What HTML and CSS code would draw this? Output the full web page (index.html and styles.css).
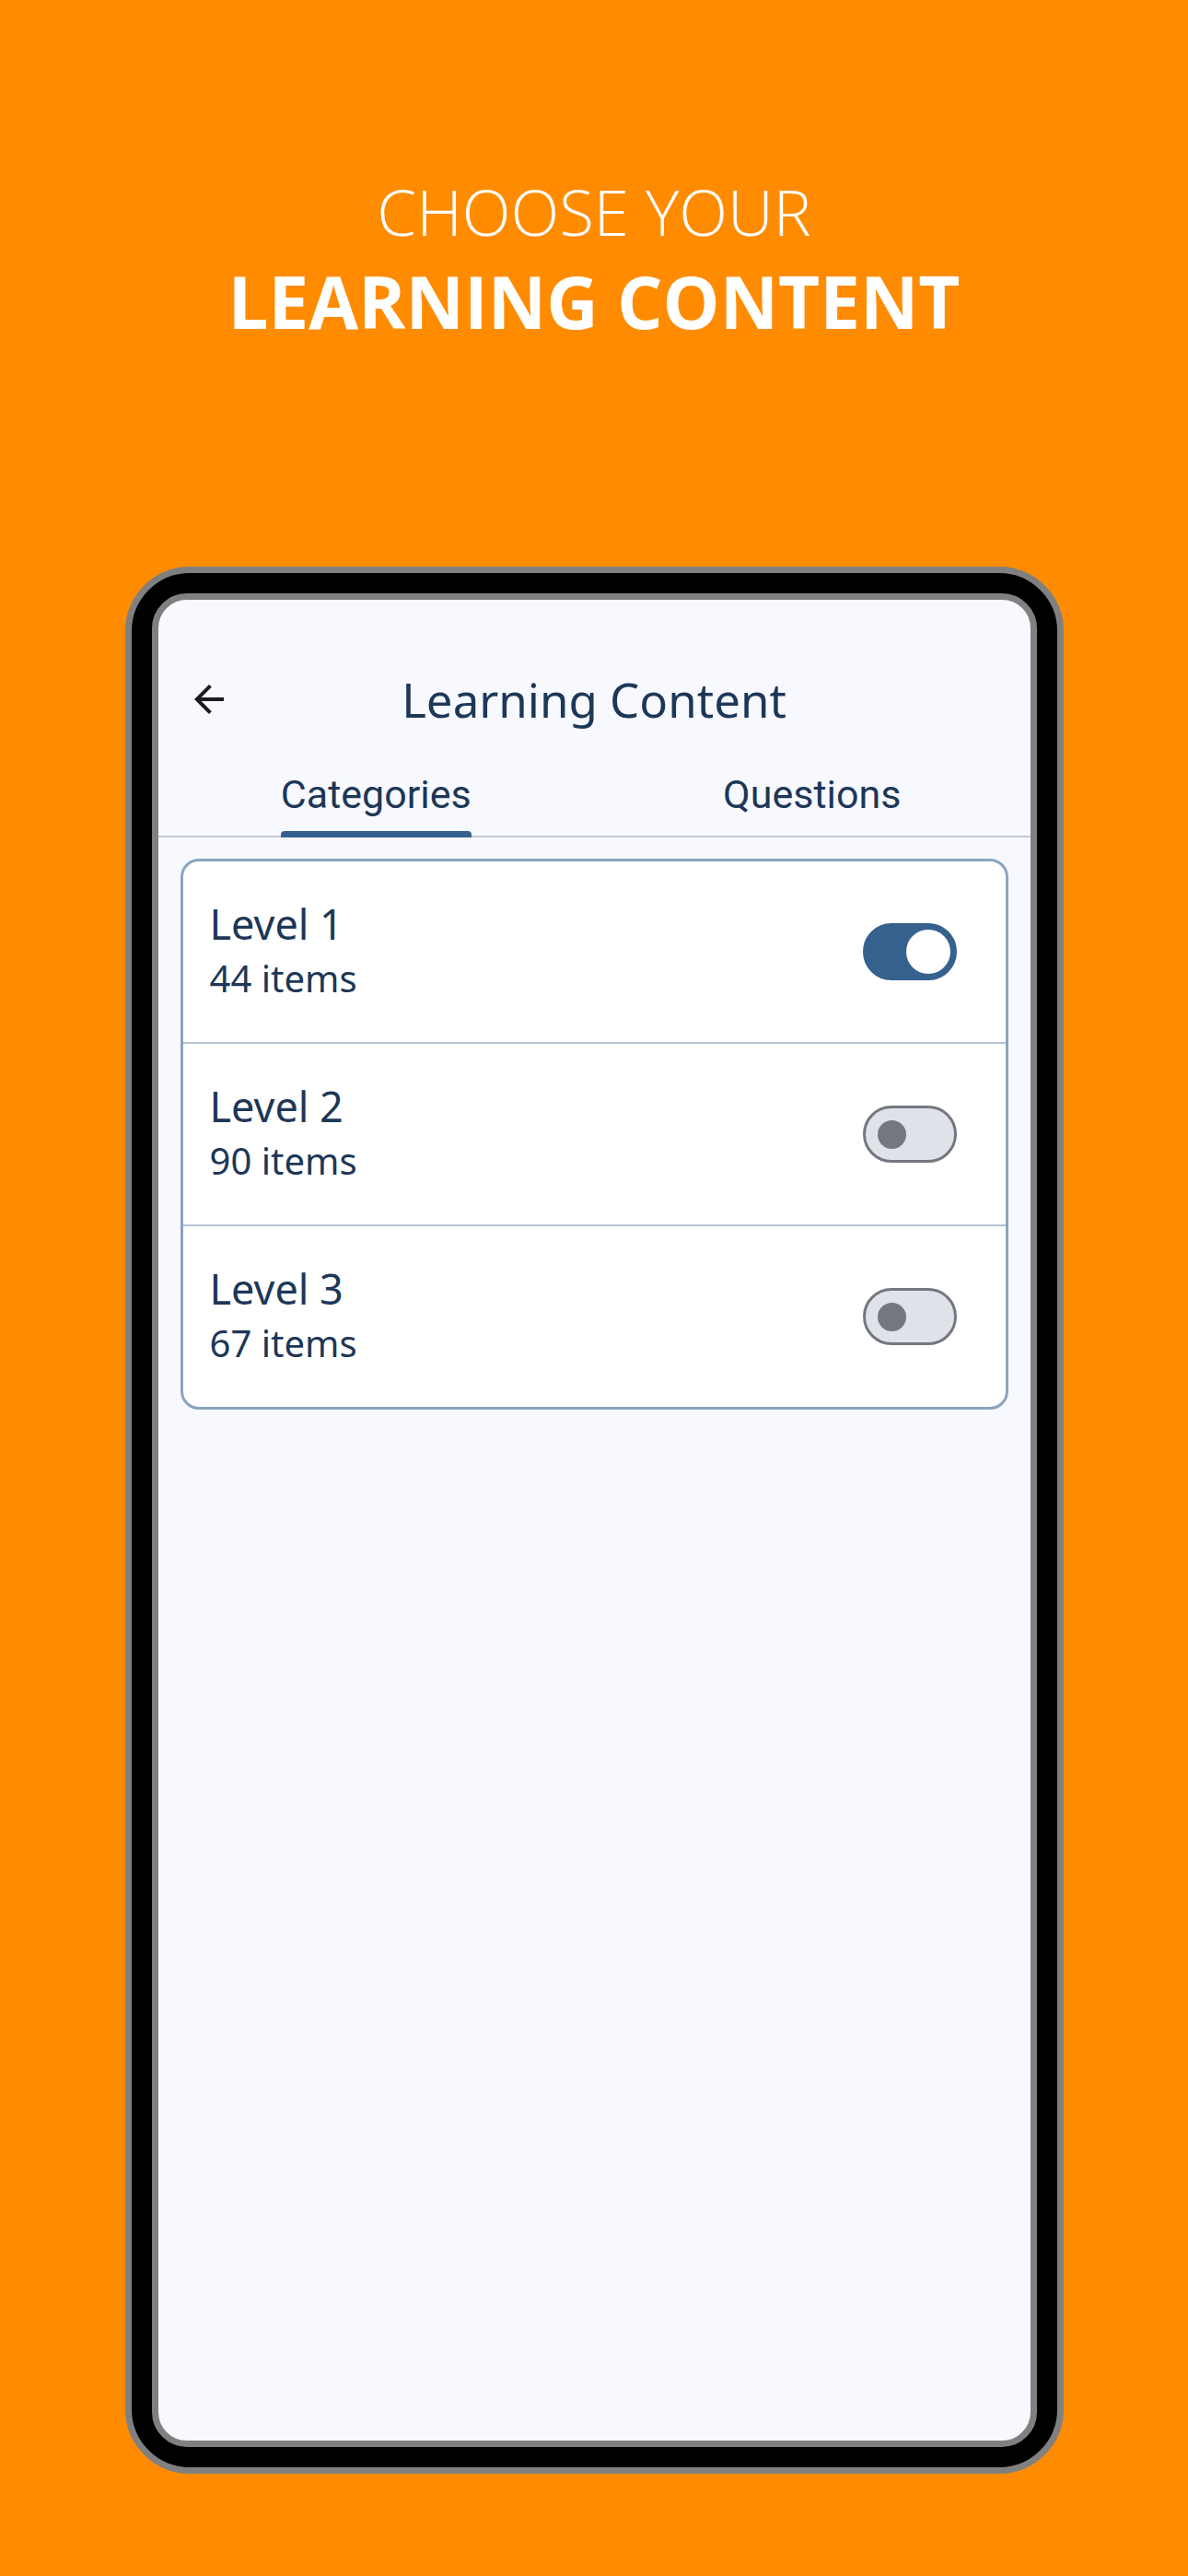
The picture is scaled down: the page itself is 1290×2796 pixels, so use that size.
FILE: index.html
```html
<!DOCTYPE html>
<html lang="en">
<head>
    <meta charset="UTF-8">
    <meta name="viewport" content="width=device-width, initial-scale=1.0">
    <title>Learning Content</title>
    <link rel="stylesheet" href="styles.css">
</head>
<body>
    <header class="promo">
        <p class="promo-light">CHOOSE YOUR</p>
        <p class="promo-bold">LEARNING CONTENT</p>
    </header>

    <div class="phone">
        <div class="screen">
            <div class="app-bar">
                <button class="back" aria-label="Back">
                    <svg viewBox="0 0 24 24" width="48" height="48">
                        <path d="M20 11H7.83l5.59-5.59L12 4l-8 8 8 8 1.41-1.41L7.83 13H20v-2z" fill="currentColor"/>
                    </svg>
                </button>
                <h1>Learning Content</h1>
                <span></span>
            </div>

            <div class="tabs">
                <div class="tab active"><span class="tab-label">Categories</span></div>
                <div class="tab"><span class="tab-label">Questions</span></div>
            </div>

            <div class="card">
                <div class="row">
                    <div class="row-text">
                        <div class="row-title">Level 1</div>
                        <div class="row-sub">44 items</div>
                    </div>
                    <div class="switch on"><span class="knob"></span></div>
                </div>
                <div class="row">
                    <div class="row-text">
                        <div class="row-title">Level 2</div>
                        <div class="row-sub">90 items</div>
                    </div>
                    <div class="switch"><span class="knob"></span></div>
                </div>
                <div class="row">
                    <div class="row-text">
                        <div class="row-title">Level 3</div>
                        <div class="row-sub">67 items</div>
                    </div>
                    <div class="switch"><span class="knob"></span></div>
                </div>
            </div>
        </div>
    </div>
</body>
</html>
```

FILE: styles.css
```css
body {
    margin: 0;
    padding: 0;
    width: 1290px;
    height: 2796px;
    background-color: #ff8c00;
    font-family: "Noto Sans", "Open Sans", sans-serif;
    overflow: hidden;
}

.promo {
    padding-top: 181px;
    text-align: center;
    color: white;
    font-family: "Open Sans", "Noto Sans", sans-serif;
}

.promo p {
    margin: 0;
}

.promo-light {
    font-size: 69px;
    font-weight: 300;
    line-height: 96px;
}

.promo-bold {
    font-size: 78px;
    font-weight: 700;
    line-height: 100px;
}

.phone {
    width: 1019px;
    height: 2070px;
    box-sizing: border-box;
    margin: 238px auto 0;
    padding: 22px;
    background-color: #000;
    border: 7px solid #808080;
    border-radius: 70px;
    display: flex;
}

.screen {
    flex: 1;
    background-color: #f8f9ff;
    border: 7px solid #808080;
    border-radius: 38px;
    overflow: hidden;
}

.app-bar {
    display: grid;
    grid-template-columns: 48px 1fr 48px;
    align-items: center;
    padding: 72px 31px 0;
}

.back {
    width: 48px;
    height: 48px;
    padding: 0;
    border: none;
    background: none;
    color: #1b1c20;
    display: flex;
}

.app-bar h1 {
    margin: 0;
    text-align: center;
    font-size: 51px;
    font-weight: 400;
    line-height: 72px;
    color: #1d3757;
}

.tabs {
    display: flex;
    border-bottom: 2px solid #c4c6d0;
}

.tab {
    flex: 1;
    text-align: center;
    padding-top: 37px;
}

.tab-label {
    display: inline-block;
    position: relative;
    padding-bottom: 15px;
    font-family: Roboto, "Noto Sans", sans-serif;
    font-size: 43px;
    line-height: 60px;
    color: #1d3757;
}

.tab.active .tab-label::after {
    content: "";
    position: absolute;
    left: 0;
    right: 0;
    bottom: -2px;
    height: 7px;
    border-radius: 4px 4px 0 0;
    background-color: #36618f;
}

.card {
    margin: 23px 24px 0;
    background-color: white;
    border: 3px solid #8ba4c1;
    border-radius: 20px;
    overflow: hidden;
}

.row {
    height: 196px;
    display: flex;
    align-items: center;
    justify-content: space-between;
    padding: 0 53px 0 29px;
    border-top: 2px solid #b4c3d5;
}

.row:first-child {
    border-top: none;
}

.row-text {
    padding-bottom: 5px;
    color: #1d3757;
}

.row-title {
    font-size: 45px;
    line-height: 62px;
}

.row-sub {
    font-size: 40px;
    line-height: 56px;
}

.switch {
    width: 102px;
    height: 62px;
    box-sizing: border-box;
    border-radius: 31px;
    border: 3px solid #74777f;
    background-color: #e0e2e9;
    display: flex;
    align-items: center;
    padding-left: 13px;
}

.switch .knob {
    width: 31px;
    height: 31px;
    border-radius: 50%;
    background-color: #74777f;
}

.switch.on {
    border-color: #36618f;
    background-color: #36618f;
    justify-content: flex-end;
    padding: 0 4px 0 0;
}

.switch.on .knob {
    width: 48px;
    height: 48px;
    background-color: white;
}
```
